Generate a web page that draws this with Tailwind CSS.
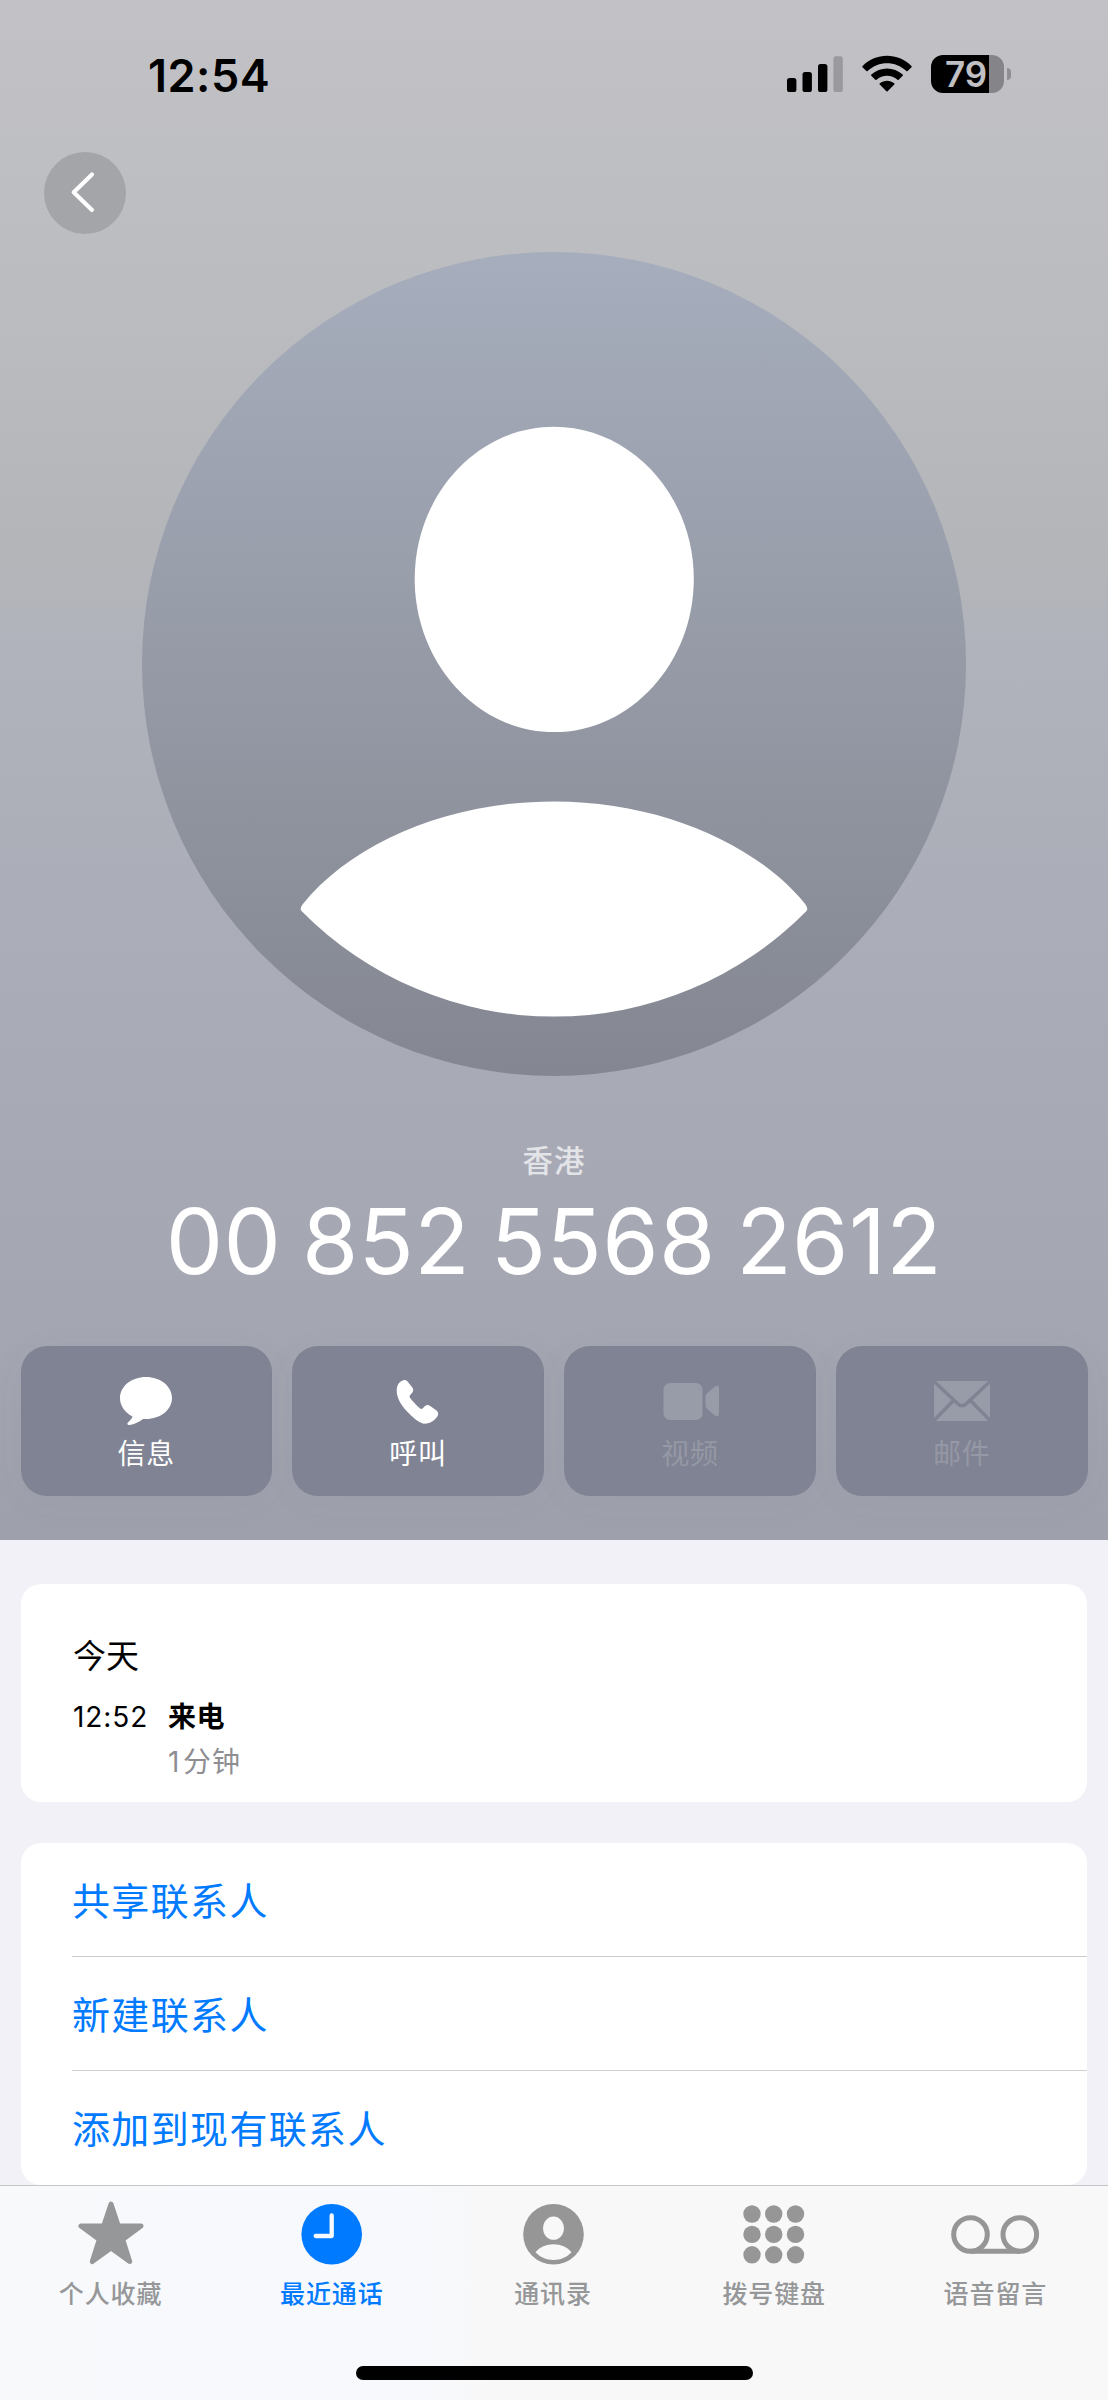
<!DOCTYPE html>
<html lang="zh-CN">
<head>
<meta charset="utf-8">
<title>最近通话</title>
<script src="https://cdn.jsdelivr.net/npm/@tailwindcss/browser@4"></script>
</head>
<body class="w-[1108px] h-[2400px] overflow-hidden flex flex-col bg-[#f2f1f7] font-[Inter,'Noto_Sans_CJK_SC',sans-serif] text-black">

<section class="h-[1540px] shrink-0 flex flex-col bg-[linear-gradient(180deg,#c2c2c6_0px,#bcbdc1_260px,#b4b5b9_560px,#b0b3bc_650px,#adb0b9_800px,#a9abb7_1000px,#a7a9b5_1130px,#a4a6b2_1330px,#9ea0ac_1540px)]">
  <!-- status bar -->
  <div class="h-[152px] shrink-0 flex items-start justify-between pl-[148px] pr-[97px]">
    <div class="mt-[48px] text-[45px] leading-[56px] font-semibold tracking-[0.500px]">12:54</div>
    <div class="mt-[55px] flex items-start">
      <svg class="w-[56px] h-[39px]" viewBox="0 0 56 39">
        <rect x="0" y="23" width="9.4" height="14" rx="2.6"/>
        <rect x="15.5" y="17" width="9.4" height="20" rx="2.6"/>
        <rect x="31" y="9" width="9.4" height="28" rx="2.6"/>
        <rect x="46.4" y="1.3" width="9.4" height="35.7" rx="2.6" fill="#99999e"/>
      </svg>
      <svg class="ml-[19px] w-[50px] h-[38px]" viewBox="0 0 50 38">
        <path d="M.5 12.3Q0 11.7.6 11.1C14-2.6 36-2.6 49.4 11.1Q50 11.7 49.5 12.3L45.6 16Q45 16.600 44.4 16C33.500 5.600 16.500 5.600 5.600 16Q5 16.600 4.400 16Z"/>
        <path d="M9.300 20.800Q8.700 20.200 9.300 19.600C18.200 11.500 31.800 11.500 40.700 19.600Q41.300 20.200 40.700 20.800L36.700 24.700Q36.100 25.200 35.500 24.700C29.500 19.500 20.500 19.500 14.500 24.700Q13.900 25.200 13.300 24.700Z"/>
        <path d="M17.700 29.500Q17.100 28.900 17.800 28.300C22 24.900 28 24.900 32.200 28.300Q32.900 28.900 32.300 29.500L25.600 36.300Q25 36.900 24.400 36.300Z"/>
      </svg>
      <div class="ml-[19px] flex items-center">
        <div class="w-[73px] h-[38px] rounded-[12px] bg-[linear-gradient(90deg,#000_57.700px,#858589_57.700px)] pl-[14px]">
          <span class="block text-[35px] leading-[39px] font-semibold text-[#c0c0c4]">79</span>
        </div>
        <div class="ml-[3px] w-[4px] h-[12px] rounded-r-full bg-[#8f8f93]"></div>
      </div>
    </div>
  </div>

  <div class="h-[100px] shrink-0 pl-[44px]">
    <div class="size-[82px] rounded-full bg-[#a4a5a9]">
      <svg class="size-[82px]" viewBox="0 0 82 82" fill="none" stroke="#fff" stroke-width="4.200" stroke-linecap="round" stroke-linejoin="round"><path d="M48 22.500 29.700 40.200l18.300 17.700"/></svg>
    </div>
  </div>

  <svg class="mx-auto shrink-0 size-[824px]" viewBox="142 251.600 824 824">
    <defs><linearGradient id="disc" x1="0" y1="0" x2="0" y2="1"><stop offset="0" stop-color="#a6adbc"/><stop offset=".5" stop-color="#959aa6"/><stop offset="1" stop-color="#848791"/></linearGradient></defs>
    <circle cx="554" cy="663.600" r="412" fill="url(#disc)"/>
    <path fill="#fff" d="M554 426.400C631 426.400 693.800 495 693.800 578.500S631 731.700 554 731.700 414.700 662 414.700 578.500 477 426.400 554 426.400Z"/>
    <path fill="#fff" d="M302.500 904C352 843 448 801 554 801S756 843 805.500 904Q808.500 908.500 806.500 910.500A354.400 354.400 0 0 1 301.500 910.500Q299.500 908.500 302.500 904Z"/>
  </svg>

  <div class="mt-[62px] h-[46px] text-center text-[30.500px] leading-[46px] font-medium tracking-[1px] text-[#e3e4e8]">香港</div>
  <div class="mt-[2px] h-[110px] text-center text-[91px] leading-[110px] whitespace-nowrap tracking-[0.400px] [word-spacing:-5.500px] text-white">00 852 5568 2612</div>

  <div class="mt-[50px] mx-[20.500px] grid grid-cols-4 gap-x-[20.500px]">
    <div class="h-[150px] rounded-[26px] bg-[#808393] flex flex-col items-center shadow-[0_6px_36px_rgba(90,92,110,0.05)] text-white">
      <svg class="mt-[31px] w-[52px] h-[48px]" viewBox="0 0 52 48" fill="#fff"><path d="M26 0C40.500 0 52 9.300 52 21S40.500 42 26 42C25 42 24 41.900 23 41.900 19.500 44.500 14.500 47.200 9.500 48 7.500 48.300 6.800 46.700 8 45.500 10.500 43 12 41.500 12.500 39.500 5 35.500 0 29 0 21 0 9.300 11.500 0 26 0Z"/></svg>
      <div class="mt-[9px] text-[28px] leading-[40px] tracking-[0.700px]">信息</div>
    </div>
    <div class="h-[150px] rounded-[26px] bg-[#808393] flex flex-col items-center shadow-[0_6px_36px_rgba(90,92,110,0.05)] text-white">
      <svg class="mt-[31px] w-[52px] h-[48px]" viewBox="1 -1 52 48" fill="#fff"><path d="M32.600 45.700C37 45.700 41 44.500 44 41.300 47.500 37.800 48.300 35 45.500 32.500L39.200 28C37 26.600 35.500 26.800 33.500 28.600L31.800 30.200C30.800 31.100 29.800 31.100 28.800 30.200 26 27.800 21.300 23 19 19.800 18.300 18.700 18.400 18 19.200 17.100L20.800 15.300C22.600 13.300 22.700 11.700 21.300 9.600L16.800 3.700C14.500.8 11.500 1.600 8.500 4.600 6.600 6.500 5.700 9.500 5.700 12.800 5.700 19.500 9.800 27 15.800 33.200 21.200 38.800 27.500 44.500 32.600 45.700Z"/></svg>
      <div class="mt-[9px] text-[28px] leading-[40px] tracking-[0.700px]">呼叫</div>
    </div>
    <div class="h-[150px] rounded-[26px] bg-[#808393] flex flex-col items-center shadow-[0_6px_36px_rgba(90,92,110,0.05)] text-[#9598a5]">
      <svg class="mt-[31px] w-[58px] h-[48px]" viewBox="0 0 58 48" fill="#989ba8"><rect x="2.500" y="6" width="39" height="37" rx="6.500"/><path d="M44.500 19.500Q44.500 17.500 46 16.200L53.500 9.700Q58 7 58 11V36.500Q58 41 53.500 38.300L46 31.800Q44.500 30.500 44.500 28.500Z"/></svg>
      <div class="mt-[9px] text-[28px] leading-[40px] tracking-[0.700px]">视频</div>
    </div>
    <div class="h-[150px] rounded-[26px] bg-[#808393] flex flex-col items-center shadow-[0_6px_36px_rgba(90,92,110,0.05)] text-[#9598a5]">
      <svg class="mt-[35px] w-[56px] h-[40px]" viewBox="0 0 56 40"><rect width="56" height="40" rx="3.500" fill="#989ba8"/><path d="M0 .5 23.500 22.500Q28 27 32.500 22.500L56 .5M0 39.500 19.500 19.500M56 39.500 36.500 19.500" fill="none" stroke="#808393" stroke-width="3.400"/></svg>
      <div class="mt-[13px] text-[28px] leading-[40px] tracking-[0.700px]">邮件</div>
    </div>
  </div>
</section>

<main class="h-[645px] shrink-0 px-[21px] pt-[44px] flex flex-col">
  <section class="h-[218px] shrink-0 rounded-[20px] bg-white pl-[52px] pt-[48px]">
    <h2 class="text-[33px] leading-[48px]">今天</h2>
    <div class="mt-[17px] grid grid-cols-[95px_auto] text-[28px]">
      <div class="leading-[40px] tracking-[0.900px]">12:52</div>
      <div class="leading-[40px] font-bold tracking-[0.600px]">来电</div>
      <div class="col-start-2 mt-[5px] leading-[40px] text-[#8e8e93]"><span class="tracking-[3.500px]">1</span><span class="tracking-[1px]">分钟</span></div>
    </div>
  </section>

  <section class="mt-[41px] h-[342px] shrink-0 rounded-[20px] bg-white pl-[51px] text-[38px] leading-[116px] tracking-[1.350px] text-[#007aff]">
    <div class="h-[114px] border-b border-[#cbcbce]">共享联系人</div>
    <div class="h-[114px] border-b border-[#cfcfd2]">新建联系人</div>
    <div class="h-[114px]">添加到现有联系人</div>
  </section>
</main>

<nav class="h-[215px] shrink-0 border-t border-[#c6c6c9] bg-[linear-gradient(90deg,#f8f9fb,#f7f9fd_35%,#f8f8f8_45%,#f8f8f8)] flex flex-col">
  <div class="h-[180px] grid grid-cols-5 pr-[2px] text-[25px] leading-[36px] font-medium text-[#969799] tracking-[0.900px]">
    <div class="flex flex-col items-center">
      <svg class="mt-[14px] w-[66px] h-[66px]" viewBox="0 0 66 66"><path fill="#969799" stroke="#969799" stroke-width="5" stroke-linejoin="round" d="M33 4 40.300 26H63L44.700 39.500 51.700 61.500 33 48 14.300 61.500 21.300 39.500 3 26H25.700Z"/></svg>
      <div class="mt-[10px]">个人收藏</div>
    </div>
    <div class="flex flex-col items-center text-[#007aff]">
      <svg class="mt-[14px] w-[66px] h-[66px]" viewBox="0 0 66 66"><circle cx="32.700" cy="34.300" r="30.300" fill="#007aff"/><path d="M32.700 15.500V36H16.700" fill="none" stroke="#f7f9fd" stroke-width="4.300" stroke-linecap="round" stroke-linejoin="round"/></svg>
      <div class="mt-[10px]">最近通话</div>
    </div>
    <div class="flex flex-col items-center">
      <svg class="mt-[14px] w-[66px] h-[66px]" viewBox="0 0 66 66"><circle cx="33.500" cy="34.300" r="30.300" fill="#969696"/><g transform="translate(.5)" fill="#f8f8f8"><ellipse cx="33" cy="28.200" rx="10.400" ry="11.600"/><path d="M15 52.300C19 47 26 44.300 33 44.300S47 47 51 52.300C46 57.500 40 60 33 60S20 57.500 15 52.300Z"/></g></svg>
      <div class="mt-[10px]">通讯录</div>
    </div>
    <div class="flex flex-col items-center">
      <svg class="mt-[14px] w-[66px] h-[66px]" viewBox="0 0 66 66" fill="#969696"><circle cx="11" cy="14" r="8.700"/><circle cx="32.700" cy="14" r="8.700"/><circle cx="54.500" cy="14" r="8.700"/><circle cx="11" cy="34.400" r="8.700"/><circle cx="32.700" cy="34.400" r="8.700"/><circle cx="54.500" cy="34.400" r="8.700"/><circle cx="11" cy="54.800" r="8.700"/><circle cx="32.700" cy="54.800" r="8.700"/><circle cx="54.500" cy="54.800" r="8.700"/></svg>
      <div class="mt-[10px]">拨号键盘</div>
    </div>
    <div class="flex flex-col items-center">
      <svg class="mt-[14px] w-[90px] h-[66px]" viewBox="0 0 90 66" fill="none" stroke="#969696" stroke-width="5"><circle cx="20.500" cy="34.500" r="16.800"/><circle cx="69.800" cy="34.500" r="16.800"/><path d="M20.500 51.300H69.800"/></svg>
      <div class="mt-[10px]">语音留言</div>
    </div>
  </div>
  <div class="mx-auto w-[397px] h-[14px] rounded-full bg-black"></div>
</nav>
</body>
</html>
